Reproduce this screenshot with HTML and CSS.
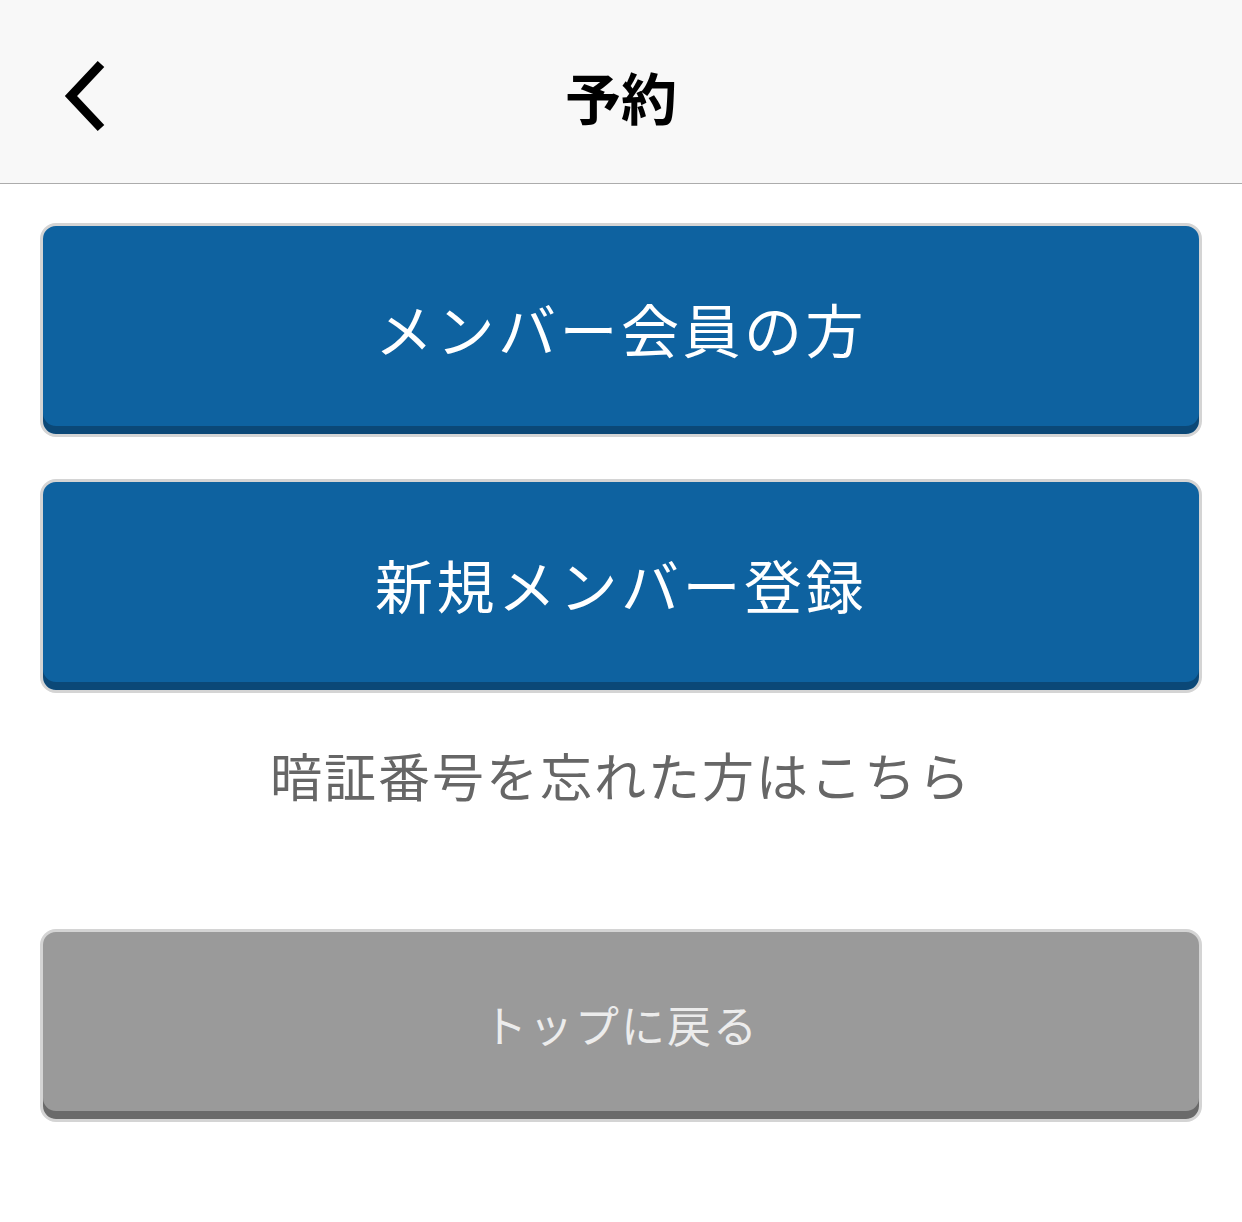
FILE: index.html
```html
<!DOCTYPE html>
<html lang="ja">
<head>
    <meta charset="UTF-8">
    <meta name="viewport" content="width=device-width, initial-scale=1.0">
    <title>予約</title>
    <link rel="stylesheet" href="styles.css">
</head>
<body>
    <header class="topbar">
        <a class="back" href="/">
            <svg width="50" height="80" viewBox="0 0 50 80">
                <polyline points="38,8 8,40 38,72" fill="none" stroke="#000" stroke-width="9" stroke-linecap="butt" stroke-linejoin="miter"/>
            </svg>
        </a>
        <h1 class="title">予約</h1>
        <span></span>
    </header>

    <main class="content">
        <a class="btn btn-blue" href="/login">メンバー会員の方</a>
        <a class="btn btn-blue" href="/register">新規メンバー登録</a>
        <a class="forgot" href="/reminder">暗証番号を忘れた方はこちら</a>
        <a class="btn btn-gray" href="/">トップに戻る</a>
    </main>
</body>
</html>
```

FILE: styles.css
```css
body {
    margin: 0;
    background-color: #fff;
    font-family: "Noto Sans CJK JP", "Noto Sans", sans-serif;
}

a {
    text-decoration: none;
}

.topbar {
    height: 184px;
    box-sizing: border-box;
    background-color: #f8f8f8;
    border-bottom: 1px solid #acacac;
    display: grid;
    grid-template-columns: 160px 1fr 160px;
    align-items: center;
    padding-top: 8px;
}

.back {
    display: flex;
    padding-left: 63px;
}

.title {
    margin: 0;
    text-align: center;
    font-size: 56px;
    font-weight: bold;
    color: #000;
}

.content {
    display: flex;
    flex-direction: column;
    padding: 39px 40px 0;
}

.btn {
    display: flex;
    align-items: center;
    justify-content: center;
    box-sizing: border-box;
    border: 3px solid #d4d4d4;
    border-radius: 16px;
    color: #fff;
    letter-spacing: 2px;
}

.btn-blue {
    height: 214px;
    margin-bottom: 42px;
    background-color: #0e62a0;
    box-shadow: inset 0 -8px 0 #0b4877;
    font-size: 58px;
    letter-spacing: 3.5px;
    padding-bottom: 4px;
}

.btn-gray {
    height: 193px;
    margin-top: 114px;
    background-color: #9a9a9a;
    box-shadow: inset 0 -8px 0 #6a6a6a;
    font-size: 44px;
    color: #ececec;
    padding-bottom: 4px;
}

.forgot {
    margin-top: 0;
    line-height: 80px;
    text-align: center;
    font-size: 52px;
    letter-spacing: 2px;
    color: #666;
}
```
